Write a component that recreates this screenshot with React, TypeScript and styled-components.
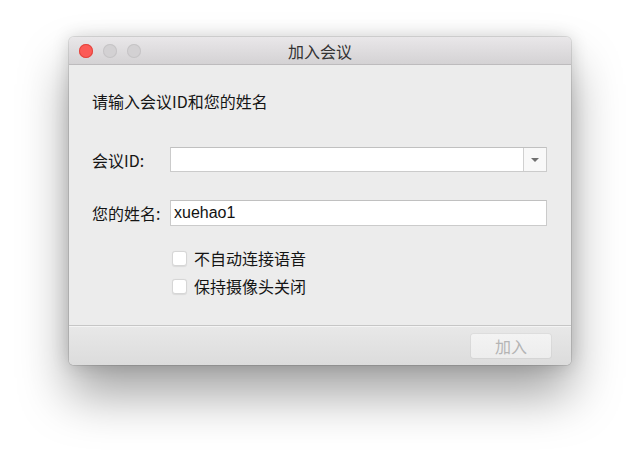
import React from "react";
import styled, { createGlobalStyle } from "styled-components";

const Global = createGlobalStyle`
  html, body { margin: 0; padding: 0; background: #ffffff; }
  body { font-family: "Noto Sans CJK SC", "Noto Sans", sans-serif; }
  * { box-sizing: border-box; }
`;

const Stage = styled.div`
  width: 640px;
  height: 465px;
  padding: 37px 0 0 69px;
  background: #ffffff;
  overflow: hidden;
`;

const Window = styled.div`
  width: 502px;
  height: 328px;
  display: flex;
  flex-direction: column;
  border-radius: 5px;
  overflow: hidden;
  background: #ececec;
  box-shadow: 0 30px 50px rgba(0, 0, 0, 0.36), 0 0 18px rgba(0, 0, 0, 0.16),
    0 0 0 1px rgba(0, 0, 0, 0.1);
`;

const TitleBar = styled.div`
  height: 28px;
  flex: none;
  display: grid;
  grid-template-columns: 1fr auto 1fr;
  align-items: center;
  padding: 0 10px;
  background: linear-gradient(#e9e7e9, #d4d2d4);
  border-bottom: 1px solid #bdbbbd;
`;

const Lights = styled.div`
  display: flex;
  gap: 10px;
  align-items: center;
`;

const Light = styled.span<{ $color: string; $edge: string }>`
  width: 14px;
  height: 14px;
  border-radius: 50%;
  background: ${(p) => p.$color};
  box-shadow: inset 0 0 0 1px ${(p) => p.$edge};
`;

const Title = styled.div`
  font-size: 16px;
  color: #333;
  line-height: 20px;
`;

const Content = styled.div`
  flex: 1;
  padding: 26px 24px 0 23px;
  display: flex;
  flex-direction: column;
  color: #151515;
`;

const Heading = styled.div`
  font-size: 16px;
  line-height: 20px;
  margin-bottom: 36px;
`;

const FieldRow = styled.div<{ $gap: number }>`
  display: grid;
  grid-template-columns: 78px 1fr;
  align-items: center;
  margin-bottom: ${(p) => p.$gap}px;
`;

const Label = styled.label`
  font-size: 16px;
  line-height: 20px;
  white-space: nowrap;
`;

const Field = styled.div<{ $h: number }>`
  height: ${(p) => p.$h}px;
  display: flex;
  background: #ffffff;
  border: 1px solid #cbcbcb;
  border-top-color: #c0c0c0;
`;

const TextInput = styled.input`
  flex: 1;
  min-width: 0;
  border: none;
  outline: none;
  background: transparent;
  padding: 0 3px;
  font-family: "Liberation Sans", "Noto Sans CJK SC", sans-serif;
  font-size: 16px;
  color: #111;
`;

const DropButton = styled.div`
  width: 23px;
  flex: none;
  border-left: 1px solid #d0d0d0;
  background: #f8f8f8;
  display: flex;
  align-items: center;
  justify-content: center;
`;

const Arrow = styled.span`
  width: 0;
  height: 0;
  border-left: 4px solid transparent;
  border-right: 4px solid transparent;
  border-top: 4px solid #6f6f6f;
`;

const Checks = styled.div`
  display: flex;
  flex-direction: column;
  gap: 8px;
  padding-left: 80px;
`;

const CheckRow = styled.label`
  display: flex;
  align-items: center;
  gap: 7px;
  height: 20px;
  font-size: 16px;
  line-height: 20px;
`;

const Box = styled.span`
  width: 15px;
  height: 15px;
  border-radius: 3px;
  background: #ffffff;
  border: 1px solid #d6d6d6;
  box-shadow: 0 0.5px 1px rgba(0, 0, 0, 0.08);
`;

const Footer = styled.div`
  height: 40px;
  flex: none;
  display: flex;
  align-items: center;
  justify-content: flex-end;
  padding: 0 20px 0 0;
  border-top: 1px solid #c6c6c6;
  box-shadow: inset 0 1px 0 #f4f4f4;
  background: linear-gradient(#e8e8e8, #dcdcdc);
`;

const JoinButton = styled.button`
  width: 80px;
  height: 24px;
  margin-top: 1px;
  border: none;
  border-radius: 3px;
  background: linear-gradient(#f3f3f3, #ededed);
  box-shadow: 0 0 0 1px rgba(0, 0, 0, 0.04);
  font-family: "Noto Sans CJK SC", sans-serif;
  font-size: 16px;
  color: #b4b4b4;
  padding: 0;
`;

export default function App() {
  return (
    <>
      <Global />
      <Stage>
        <Window>
          <TitleBar>
            <Lights>
              <Light $color="#fc5b57" $edge="#e2463f" />
              <Light $color="#d3d1d3" $edge="#c6c4c6" />
              <Light $color="#d3d1d3" $edge="#c6c4c6" />
            </Lights>
            <Title>加入会议</Title>
            <span />
          </TitleBar>
          <Content>
            <Heading>请输入会议ID和您的姓名</Heading>
            <FieldRow $gap={28}>
              <Label>会议ID:</Label>
              <Field $h={25}>
                <TextInput defaultValue="" />
                <DropButton>
                  <Arrow />
                </DropButton>
              </Field>
            </FieldRow>
            <FieldRow $gap={22}>
              <Label>您的姓名:</Label>
              <Field $h={26}>
                <TextInput defaultValue="xuehao1" />
              </Field>
            </FieldRow>
            <Checks>
              <CheckRow>
                <Box />
                不自动连接语音
              </CheckRow>
              <CheckRow>
                <Box />
                保持摄像头关闭
              </CheckRow>
            </Checks>
          </Content>
          <Footer>
            <JoinButton>加入</JoinButton>
          </Footer>
        </Window>
      </Stage>
    </>
  );
}
